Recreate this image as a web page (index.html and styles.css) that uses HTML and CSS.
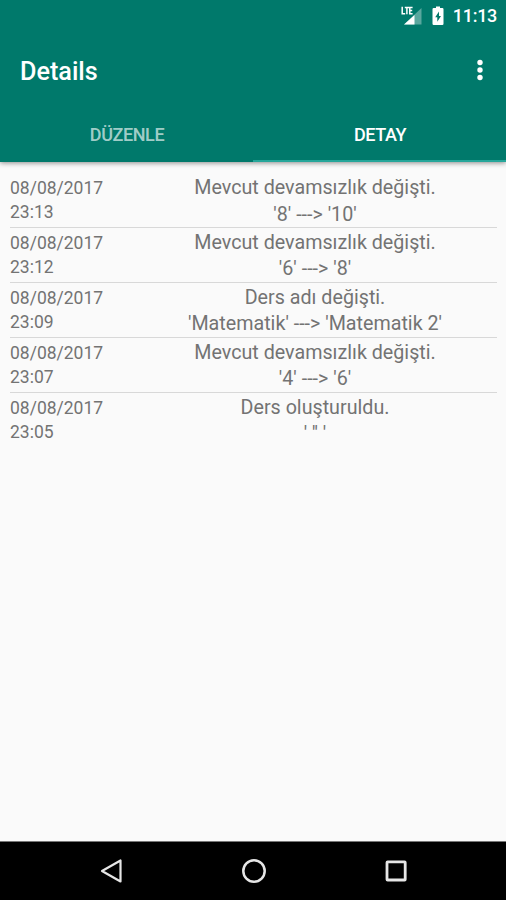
FILE: index.html
```html
<!DOCTYPE html>
<html lang="tr">

<head>
    <meta charset="UTF-8">
    <title>Details</title>
    <link rel="stylesheet" href="styles.css">
</head>

<body>
    <header class="header">
        <div class="status-bar">
            <!-- LTE signal -->
            <svg class="signal" width="22" height="20" viewBox="0 0 22 20">
                <path d="M21.5 2V18.5H4Z" fill="#fff" fill-opacity=".35" />
                <path d="M14.5 9V18.5H4Z" fill="#fff" />
                <path d="M2.2 .8V7.7H5.2M4.8 1.6H9M6.9 1.6V8.3M12.6 1.6H9.8V7.7H12.6M9.8 4.6H12.2" fill="none" stroke="#fff" stroke-width="1.5" />
            </svg>
            <!-- charging battery -->
            <svg class="battery" width="12" height="20" viewBox="0 0 12 20">
                <path d="M4 .5H8V2H10.3Q11.5 2 11.5 3.2V17.8Q11.5 19 10.3 19H1.7Q.5 19 .5 17.8V3.2Q.5 2 1.7 2H4Z" fill="#fff" />
                <path d="M7 5.5L3.2 11.3H5.3V15.8L9 9.9H7Z" fill="#00796b" />
            </svg>
            <span class="clock">11:13</span>
        </div>
        <div class="toolbar">
            <h1 class="title">Details</h1>
            <svg width="6" height="22" viewBox="0 0 6 22">
                <circle cx="3" cy="3.5" r="2.7" fill="#fff" />
                <circle cx="3" cy="11" r="2.7" fill="#fff" />
                <circle cx="3" cy="18.5" r="2.7" fill="#fff" />
            </svg>
        </div>
        <nav class="tabs">
            <div class="tab">DÜZENLE</div>
            <div class="tab active">DETAY</div>
        </nav>
    </header>

    <main class="list">
        <div class="row">
            <div class="date">08/08/2017<br>23:13</div>
            <div class="message">Mevcut devamsızlık değişti.<br>'8' ---&gt; '10'</div>
        </div>
        <div class="row">
            <div class="date">08/08/2017<br>23:12</div>
            <div class="message">Mevcut devamsızlık değişti.<br>'6' ---&gt; '8'</div>
        </div>
        <div class="row">
            <div class="date">08/08/2017<br>23:09</div>
            <div class="message">Ders adı değişti.<br>'Matematik' ---&gt; 'Matematik 2'</div>
        </div>
        <div class="row">
            <div class="date">08/08/2017<br>23:07</div>
            <div class="message">Mevcut devamsızlık değişti.<br>'4' ---&gt; '6'</div>
        </div>
        <div class="row">
            <div class="date">08/08/2017<br>23:05</div>
            <div class="message">Ders oluşturuldu.<br>' '' '</div>
        </div>
    </main>

    <footer class="nav-bar">
        <svg width="24" height="26" viewBox="0 0 24 26">
            <path d="M21.5 2.5V23.5L3 13Z" fill="none" stroke="#e6e6e6" stroke-width="2.2" stroke-linejoin="round" />
        </svg>
        <svg width="26" height="26" viewBox="0 0 26 26">
            <circle cx="13" cy="13" r="10.7" fill="none" stroke="#e6e6e6" stroke-width="2.5" />
        </svg>
        <svg width="24" height="26" viewBox="0 0 24 26">
            <rect x="2" y="3.8" width="18.2" height="18.2" rx=".6" fill="none" stroke="#e6e6e6" stroke-width="2.8" />
        </svg>
    </footer>
</body>

</html>
```

FILE: styles.css
```css
* {
    box-sizing: border-box;
}

body {
    background-color: #fafafa;
    display: flex;
    flex-direction: column;
    font-family: Roboto, sans-serif;
    height: 900px;
    margin: 0;
    overflow: hidden;
}

.header {
    background-color: #00796b;
    box-shadow: 0 1px 5px rgba(0, 0, 0, 0.45);
    color: #ffffff;
    height: 162px;
}

.status-bar {
    align-items: center;
    display: flex;
    height: 31px;
    justify-content: flex-end;
    padding-right: 9px;
}

.signal {
    margin-right: 10px;
}

.battery {
    margin-right: 9px;
}

.clock {
    font-size: 18px;
    font-weight: 500;
    letter-spacing: -0.3px;
    line-height: 32px;
}

.toolbar {
    align-items: center;
    display: flex;
    height: 77px;
    justify-content: space-between;
    padding: 0 23px 0 20px;
}

.title {
    font-size: 25.2px;
    font-weight: 500;
    margin: 3px 0 0;
}

.tabs {
    display: flex;
    height: 54px;
}

.tab {
    border-bottom: 2px solid transparent;
    color: rgba(255, 255, 255, 0.65);
    flex: 1;
    font-size: 18px;
    font-weight: 500;
    letter-spacing: -0.4px;
    line-height: 53px;
    padding-left: 1px;
    text-align: center;
}

.active {
    border-bottom-color: #26a69a;
    color: #ffffff;
}

.list {
    color: #737373;
    flex: 1;
    padding: 11px 9px 0 10px;
}

.row {
    border-bottom: 1px solid #d8d8d8;
    display: flex;
    height: 54.9px;
    padding-top: 1px;
}

.row:last-child {
    border-bottom: none;
}

.date {
    font-size: 17.5px;
    line-height: 24.3px;
    padding-top: 2px;
    width: 123px;
}

.message {
    flex: 1;
    font-size: 19.7px;
    line-height: 26.6px;
    padding-top: 1px;
    text-align: center;
}

.nav-bar {
    align-items: center;
    background-color: #000000;
    border-top: 1px solid #777777;
    display: flex;
    gap: 118px;
    height: 59px;
    justify-content: center;
    padding-left: 1px;
}
```
